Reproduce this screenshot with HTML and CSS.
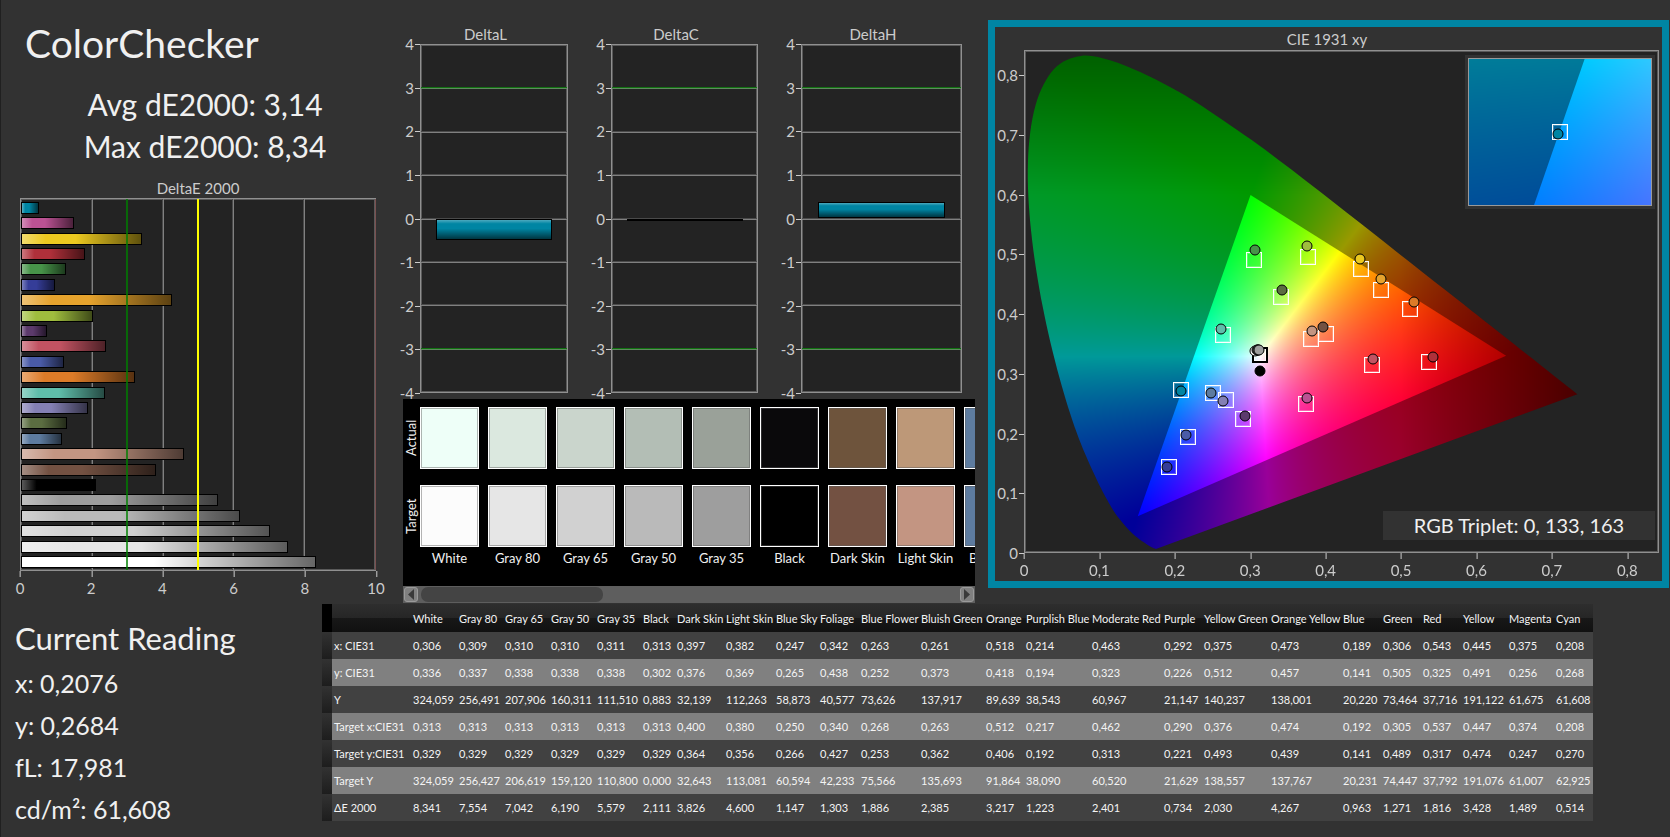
FILE: index.html
```html
<!DOCTYPE html>
<html lang="en">
	<head>
		<meta charset="UTF-8" />
		<meta name="viewport" content="width=device-width, initial-scale=1.0" />
		<title>ColorChecker</title>
		<link rel="stylesheet" href="styles.css">
	</head>
	<body>
		<main class="dashboard">
			<section class="summary">
				<h1>ColorChecker</h1>
				<p class="stat">Avg dE2000: 3,14</p>
				<p class="stat">Max dE2000: 8,34</p>
				<div class="de-chart">
					<h2 class="chart-title">DeltaE 2000</h2>
					<div class="plot de-plot" id="de-plot"></div>
					<div class="x-axis" id="de-axis"></div>
				</div>
			</section>

			<section class="middle">
				<div class="delta-charts">
					<div class="delta-chart" data-value="-0.5">
						<h2 class="chart-title">DeltaL</h2>
					</div>
					<div class="delta-chart" data-value="-0.03">
						<h2 class="chart-title">DeltaC</h2>
					</div>
					<div class="delta-chart" data-value="0.37">
						<h2 class="chart-title">DeltaH</h2>
					</div>
				</div>
				<div class="patches">
					<div class="patch-heads">
						<span class="patch-head">Actual</span>
						<span class="patch-head">Target</span>
					</div>
					<div class="patch-list" id="patch-list"></div>
				</div>
				<div class="scrollbar">
					<button class="scroll-button" aria-label="Scroll left">
						<svg viewBox="0 0 12 13"><path d="M9 1v11L3 6.5z" /></svg>
					</button>
					<div class="scroll-track"><div class="scroll-thumb"></div></div>
					<button class="scroll-button" aria-label="Scroll right">
						<svg viewBox="0 0 12 13"><path d="M3 1v11l6-5.500z" /></svg>
					</button>
				</div>
			</section>

			<section class="cie">
				<h2 class="chart-title">CIE 1931 xy</h2>
				<div class="cie-body">
					<div class="y-axis" id="cie-y"></div>
					<div class="plot cie-plot">
						<canvas id="gamut"></canvas>
						<div class="markers" id="markers"></div>
						<div class="inset">
							<div class="inset-view">
								<canvas id="inset"></canvas>
								<div class="markers" id="inset-markers"></div>
							</div>
						</div>
						<div class="triplet">RGB Triplet: 0, 133, 163</div>
					</div>
				</div>
				<div class="x-axis cie-x" id="cie-x"></div>
			</section>
		</main>

		<div class="bottom">
			<section class="reading">
				<h2>Current Reading</h2>
				<p>x: 0,2076</p>
				<p>y: 0,2684</p>
				<p>fL: 17,981</p>
				<p>cd/m²: 61,608</p>
			</section>
			<table class="readings" id="readings"></table>
		</div>

		<script src="script.js"></script>
	</body>
</html>
```

FILE: styles.css
```css
* {
	box-sizing: border-box;
}
body {
	margin: 0;
	min-height: 100vh;
	background-color: #323232;
	box-shadow: inset 1px 0 0 #202020;
	color: #f0f0f0;
	font-family: Lato, "Open Sans", sans-serif;
}
h1,
h2,
p {
	margin: 0;
	font-weight: 400;
}
canvas {
	display: block;
	width: 100%;
	height: 100%;
}
.dashboard {
	display: grid;
	grid-template-columns: minmax(0, 403fr) minmax(0, 585fr) minmax(0, 682fr);
}

/* charts */
.chart-title {
	font-size: 15px;
	line-height: 20px;
	text-align: center;
	color: #cccccc;
}
.plot {
	position: relative;
	background-color: #232323;
	border: 1px solid #909090;
	box-shadow: inset 0 0 0 1px #5a5a5a;
}
.grid-x,
.grid-y {
	position: absolute;
	background-color: #808080;
}
.grid-x {
	top: 0;
	bottom: 0;
	width: 1px;
	box-shadow: -1px 0 0 #4a4a4a;
}
.grid-y {
	left: 0;
	right: 0;
	height: 1px;
	box-shadow: 0 -1px 0 #4a4a4a;
}
.grid-x.limit-green {
	width: 2px;
	margin-left: -1px;
	background-color: rgba(0, 128, 0, 0.75);
	box-shadow: none;
}
.grid-y.limit-green {
	background-color: #5f8a5f;
	box-shadow: 0 -1px 0 #107010;
}
.grid-x.limit-yellow {
	width: 2px;
	margin-left: -1px;
	background-color: #ffff00;
	box-shadow: none;
}
.grid-x.limit-red {
	background-color: #7a5050;
	box-shadow: none;
}
.x-axis {
	position: relative;
	height: 29px;
	font-size: 15px;
	line-height: 20px;
	color: #cccccc;
}
.x-label {
	position: absolute;
	top: 7px;
	transform: translateX(-50%);
}
.x-label::before {
	content: "";
	position: absolute;
	left: 50%;
	top: -7px;
	width: 1px;
	height: 6px;
	background-color: #cccccc;
}
.y-axis {
	position: relative;
	font-size: 15px;
	line-height: 20px;
	color: #cccccc;
}
.y-label {
	position: absolute;
	right: 0;
	padding-right: 6px;
	transform: translateY(-50%);
}
.y-label::before {
	content: "";
	position: absolute;
	right: 0;
	top: 50%;
	width: 5px;
	height: 1px;
	background-color: #cccccc;
}

/* left column */
.summary {
	padding: 19px 27px 0 20px;
}
.summary h1 {
	padding-left: 5px;
	margin-bottom: 16px;
	font-size: 39px;
	line-height: 48px;
}
.stat {
	padding-left: 14px;
	font-size: 30px;
	line-height: 42px;
	text-align: center;
}
.de-chart {
	margin-top: 11px;
}
.de-plot {
	height: 373px;
	padding-top: 1px;
	display: flex;
	flex-direction: column;
	justify-content: space-around;
}
.de-bar {
	position: relative;
	height: 12px;
	border: 1px solid #000000;
	background-image: linear-gradient(90deg, rgba(255, 255, 255, 0.35), transparent 20%, transparent 45%, rgba(0, 0, 0, 0.6));
}

/* delta charts */
.middle {
	padding: 24px 13px 0 0;
}
.delta-charts {
	display: grid;
	grid-template-columns: 165fr 164fr 178fr;
	gap: 26px;
	padding-right: 13px;
}
.delta-body {
	display: grid;
	grid-template-columns: 17px 1fr;
	height: 349px;
}
.delta-bar {
	position: absolute;
	left: 10%;
	right: 10%;
	border: 1px solid #000000;
	background-color: #0085a3;
	background-image: linear-gradient(rgba(255, 255, 255, 0.3), transparent 20%, transparent 45%, rgba(0, 0, 0, 0.6));
}

/* patches */
.patches {
	display: flex;
	height: 187px;
	margin-top: 6px;
	padding-top: 8px;
	background-color: #000000;
	overflow: hidden;
}
.patch-heads {
	flex: none;
	width: 17px;
	display: flex;
	flex-direction: column;
	gap: 16px;
}
.patch-head {
	height: 62px;
	writing-mode: vertical-rl;
	transform: rotate(180deg);
	font-size: 13px;
	line-height: 17px;
	text-align: center;
}
.patch-list {
	display: flex;
	gap: 9px;
}
.patch {
	flex: none;
	width: 59px;
	text-align: center;
	font-size: 13px;
	line-height: 16px;
	white-space: nowrap;
}
.swatch {
	height: 62px;
	margin-bottom: 16px;
	border: 1px solid #ffffff;
	box-shadow: inset 0 0 0 1px rgba(90, 90, 90, 0.45);
}
.swatch + .swatch {
	margin-bottom: 3px;
}
.scrollbar {
	display: flex;
	align-items: center;
	height: 17px;
	padding: 0 1px;
	gap: 3px;
	background-color: #5e5e5e;
}
.scroll-button {
	width: 14px;
	height: 15px;
	padding: 0;
	border: 1px solid #9a9a9a;
	border-radius: 3px;
	background-color: #808080;
}
.scroll-button svg {
	display: block;
	width: 12px;
	height: 13px;
	fill: #3a3a3a;
}
.scroll-track {
	flex: 1;
}
.scroll-thumb {
	width: 34%;
	height: 15px;
	border-radius: 7px;
	background-color: #444444;
}

/* chromaticity chart */
.cie {
	height: 568px;
	margin: 20px 1px 0 0;
	padding: 2px 3px 0 0;
	border: 7px solid #0085a3;
}
.cie-body {
	display: grid;
	grid-template-columns: 29px 1fr;
	height: 503px;
	margin-top: 1px;
}
.cie-x {
	margin-left: 29px;
}
.markers {
	position: absolute;
	inset: 0;
}
.target,
.actual {
	position: absolute;
	transform: translate(-50%, -50%);
}
.target {
	width: 16px;
	height: 16px;
	border: 1px solid #ffffff;
	box-shadow: inset 0 0 0 1px rgba(255, 255, 255, 0.25);
}
.target.gray {
	border: 2px solid #000000;
}
.actual {
	width: 11px;
	height: 11px;
	border: 1px solid #000000;
	border-radius: 50%;
}
.inset {
	position: absolute;
	top: 4px;
	right: 3px;
	width: 190px;
	height: 154px;
	padding: 3px;
	background-color: #323232;
}
.inset-view {
	position: relative;
	height: 100%;
	border: 1px solid #999999;
}
.triplet {
	position: absolute;
	right: 3px;
	bottom: 12px;
	width: 272px;
	font-size: 20px;
	line-height: 29px;
	text-align: center;
	background-color: #323232;
}

/* bottom area */
.bottom {
	display: flex;
	align-items: flex-start;
	padding-top: 1px;
}
.reading {
	flex: none;
	width: 322px;
	padding: 13px 0 0 15px;
	font-size: 25px;
	line-height: 42px;
}
.reading h2 {
	margin-bottom: 3px;
	font-size: 31px;
}
.readings {
	table-layout: fixed;
	width: 1271px;
	border-collapse: collapse;
	font-size: 11px;
	color: #f4f4f4;
}
.readings th,
.readings td {
	height: 27px;
	padding: 0 0 0 4px;
	font-weight: 400;
	text-align: left;
	white-space: nowrap;
}
.readings thead th {
	height: 28px;
}
.readings tbody th {
	padding-left: 2px;
}
.readings thead tr {
	background: linear-gradient(#2e2e2e, #262626 50%, #181818 50%, #111111);
}
.readings tbody tr {
	background-color: #414141;
}
.readings tbody tr:nth-child(even) {
	background-color: #808080;
}
.readings tbody .grip {
	background: linear-gradient(#323232, #1d1d1d);
}
.readings thead .grip {
	background-color: #000000;
}
```

FILE: script.js
```js
// name, target color, column width, x, y, Y, target x, target y, target Y, dE
const patches = [
	["White", "#ffffff", 46, "0,306", "0,336", "324,059", "0,313", "0,329", "324,059", "8,341"],
	["Gray 80", "#e6e6e6", 46, "0,309", "0,337", "256,491", "0,313", "0,329", "256,427", "7,554"],
	["Gray 65", "#d1d1d1", 46, "0,310", "0,338", "207,906", "0,313", "0,329", "206,619", "7,042"],
	["Gray 50", "#bababa", 46, "0,310", "0,338", "160,311", "0,313", "0,329", "159,120", "6,190"],
	["Gray 35", "#9e9e9e", 46, "0,311", "0,338", "111,510", "0,313", "0,329", "110,800", "5,579"],
	["Black", "#000000", 34, "0,313", "0,302", "0,883", "0,313", "0,329", "0,000", "2,111"],
	["Dark Skin", "#735142", 49, "0,397", "0,376", "32,139", "0,400", "0,364", "32,643", "3,826"],
	["Light Skin", "#c39582", 50, "0,382", "0,369", "112,263", "0,380", "0,356", "113,081", "4,600"],
	["Blue Sky", "#5d7b9f", 44, "0,247", "0,265", "58,873", "0,250", "0,266", "60,594", "1,147"],
	["Foliage", "#5b6d41", 41, "0,342", "0,438", "40,577", "0,340", "0,427", "42,233", "1,303"],
	["Blue Flower", "#8480b4", 60, "0,263", "0,252", "73,626", "0,268", "0,253", "75,566", "1,886"],
	["Bluish Green", "#5fbdaa", 65, "0,261", "0,373", "137,917", "0,263", "0,362", "135,693", "2,385"],
	["Orange", "#dc7b28", 40, "0,518", "0,418", "89,639", "0,512", "0,406", "91,864", "3,217"],
	["Purplish Blue", "#4a5ba7", 66, "0,214", "0,194", "38,543", "0,217", "0,192", "38,090", "1,223"],
	["Moderate Red", "#c25362", 72, "0,463", "0,323", "60,967", "0,462", "0,313", "60,520", "2,401"],
	["Purple", "#5c3a6c", 40, "0,292", "0,226", "21,147", "0,290", "0,221", "21,629", "0,734"],
	["Yellow Green", "#9fbd3e", 67, "0,375", "0,512", "140,237", "0,376", "0,493", "138,557", "2,030"],
	["Orange Yellow", "#e6a32d", 72, "0,473", "0,457", "138,001", "0,474", "0,439", "137,767", "4,267"],
	["Blue", "#353d98", 40, "0,189", "0,141", "20,220", "0,192", "0,141", "20,231", "0,963"],
	["Green", "#479349", 40, "0,306", "0,505", "73,464", "0,305", "0,489", "74,447", "1,271"],
	["Red", "#b0303a", 40, "0,543", "0,325", "37,716", "0,537", "0,317", "37,792", "1,816"],
	["Yellow", "#ecc920", 46, "0,445", "0,491", "191,122", "0,447", "0,474", "191,076", "3,428"],
	["Magenta", "#bb5293", 47, "0,375", "0,256", "61,675", "0,374", "0,247", "61,007", "1,489"],
	["Cyan", "#0085a3", 41, "0,208", "0,268", "61,608", "0,208", "0,270", "62,925", "0,514"],
];
const measuredColors = ["#eefff8", "#dbe8df", "#cad5cc", "#b3beb5", "#9aa199", "#0a090b", "#6e543c", "#bd9878", "#5e7c9f"];
const rowNames = ["x: CIE31", "y: CIE31", "Y", "Target x:CIE31", "Target y:CIE31", "Target Y", "ΔE 2000"];

const num = (text) => parseFloat(text.replace(",", "."));
const byId = (id) => document.getElementById(id);

// DeltaE bars
let html = "";
for (const v of [2, 4, 6, 8]) {
	html += `<span class="grid-x" style="left:${v * 10}%"></span>`;
}
for (const p of [...patches].reverse()) {
	html += `<div class="de-bar" style="width:${num(p[9]) * 10}%;background-color:${p[1]}"></div>`;
}
html += '<span class="grid-x limit-green" style="left:30%"></span>';
html += '<span class="grid-x limit-yellow" style="left:50%"></span>';
html += '<span class="grid-x limit-red" style="left:100%"></span>';
byId("de-plot").innerHTML = html;
byId("de-axis").innerHTML = [0, 2, 4, 6, 8, 10]
	.map((v) => `<span class="x-label" style="left:${v * 10}%">${v}</span>`)
	.join("");

// DeltaL, DeltaC and DeltaH
for (const chart of document.querySelectorAll(".delta-chart")) {
	const value = parseFloat(chart.dataset.value);
	let labels = "";
	let lines = "";
	for (let v = 4; v >= -4; v--) {
		const top = (4 - v) * 12.5;
		labels += `<span class="y-label" style="top:${top}%">${v}</span>`;
		if (Math.abs(v) < 4) {
			lines += `<span class="grid-y${Math.abs(v) === 3 ? " limit-green" : ""}" style="top:${top}%"></span>`;
		}
	}
	const top = (4 - Math.max(value, 0)) * 12.5;
	lines += `<div class="delta-bar" style="top:${top}%;height:${Math.abs(value) * 12.5}%"></div>`;
	chart.innerHTML += `<div class="delta-body"><div class="y-axis">${labels}</div><div class="plot">${lines}</div></div>`;
}

// Swatches
byId("patch-list").innerHTML = measuredColors
	.map(
		(color, i) => `<div class="patch">
			<div class="swatch" style="background-color:${color}"></div>
			<div class="swatch" style="background-color:${i ? patches[i][1] : "#fcfcfc"}"></div>
			${patches[i][0]}
		</div>`
	)
	.join("");

// Readings table
html = '<colgroup><col style="width:10px"><col style="width:77px">';
html += patches.map((p) => `<col style="width:${p[2]}px">`).join("");
html += '</colgroup><thead><tr><th class="grip"></th><th></th>';
html += patches.map((p) => `<th scope="col">${p[0]}</th>`).join("");
html += "</tr></thead><tbody>";
rowNames.forEach((name, i) => {
	html += `<tr><td class="grip"></td><th scope="row">${name}</th>`;
	html += patches.map((p) => `<td>${p[i + 3]}</td>`).join("") + "</tr>";
});
byId("readings").innerHTML = html + "</tbody>";

// Chromaticity chart
const range = 0.842;
const locus = [
	[0.1741, 0.005], [0.1644, 0.0109], [0.144, 0.0297], [0.1241, 0.0578], [0.1096, 0.0868], [0.0913, 0.1327],
	[0.0687, 0.2007], [0.0454, 0.295], [0.0235, 0.4127], [0.0082, 0.5384], [0.0039, 0.6548], [0.0139, 0.7502],
	[0.0389, 0.812], [0.0743, 0.8338], [0.1142, 0.8262], [0.1547, 0.8059], [0.1929, 0.7816], [0.2296, 0.7543],
	[0.3016, 0.6923], [0.3731, 0.6245], [0.4441, 0.5547], [0.5125, 0.4866], [0.5752, 0.4242], [0.627, 0.3725],
	[0.6915, 0.3083], [0.7347, 0.2653],
];
const gamut = [[0.64, 0.33], [0.3, 0.6], [0.15, 0.06]];

function xyToRgb(x, y) {
	const X = x / y;
	const Z = (1 - x - y) / y;
	const rgb = [
		3.2406 * X - 1.5372 - 0.4986 * Z,
		-0.9689 * X + 1.8758 + 0.0415 * Z,
		0.0557 * X - 0.204 + 1.057 * Z,
	].map((c) => Math.max(c, 0));
	const fade = (1 - Math.max(x - 0.5, 0) * 2.2) * (1 - Math.max(y - 0.6, 0) * 1.6);
	return rgb.map((c) => (c / Math.max(...rgb)) * 255 * fade);
}

function drawDiagram(canvas, x0, y0, x1, y1) {
	const w = (canvas.width = canvas.clientWidth);
	const h = (canvas.height = canvas.clientHeight);
	const ctx = canvas.getContext("2d");
	const toX = (x) => ((x - x0) / (x1 - x0)) * w;
	const toY = (y) => h - ((y - y0) / (y1 - y0)) * h;

	// one layer of full colors, one dimmed for everything outside the gamut
	const layer = (level) => {
		const buffer = document.createElement("canvas");
		buffer.width = w;
		buffer.height = h;
		const image = new ImageData(w, h);
		for (let j = 0; j < h; j++) {
			for (let i = 0; i < w; i++) {
				const x = x0 + ((i + 0.5) / w) * (x1 - x0);
				const y = y1 - ((j + 0.5) / h) * (y1 - y0);
				const [r, g, b] = xyToRgb(x, y);
				image.data.set([r * level, g * level, b * level, 255], (j * w + i) * 4);
			}
		}
		buffer.getContext("2d").putImageData(image, 0, 0);
		return buffer;
	};

	const fillShape = (points, smooth, level) => {
		const p = points.map(([x, y]) => [toX(x), toY(y)]);
		ctx.save();
		ctx.beginPath();
		ctx.moveTo(...p[0]);
		for (let i = 1; i < p.length; i++) {
			if (smooth) {
				// curve that passes through every point
				const a = p[Math.max(i - 2, 0)];
				const b = p[i - 1];
				const c = p[i];
				const d = p[Math.min(i + 1, p.length - 1)];
				ctx.bezierCurveTo(
					b[0] + (c[0] - a[0]) / 6, b[1] + (c[1] - a[1]) / 6,
					c[0] - (d[0] - b[0]) / 6, c[1] - (d[1] - b[1]) / 6,
					c[0], c[1]
				);
			} else {
				ctx.lineTo(...p[i]);
			}
		}
		ctx.closePath();
		ctx.clip();
		ctx.drawImage(layer(level), 0, 0);
		ctx.restore();
	};

	fillShape(locus, true, 0.6);
	fillShape(gamut, false, 1);
}

function marker(type, x, y, x0, y0, size, color) {
	const left = ((x - x0) / size) * 100;
	const top = 100 - ((y - y0) / size) * 100;
	return `<span class="${type}" style="left:${left}%;top:${top}%${color ? ";background-color:" + color : ""}"></span>`;
}

drawDiagram(byId("gamut"), 0, 0, range, range);
drawDiagram(byId("inset"), 0.178, 0.238, 0.238, 0.298);

html = "";
patches.forEach((p, i) => {
	html += marker(i < 6 ? "target gray" : "target", num(p[6]), num(p[7]) + 0.002, 0, 0, range);
});
patches.forEach((p) => {
	html += marker("actual", num(p[3]), num(p[4]) + 0.002, 0, 0, range, p[1]);
});
byId("markers").innerHTML = html;
byId("inset-markers").innerHTML =
	marker("target", 0.208, 0.268, 0.178, 0.238, 0.06) +
	marker("actual", 0.2072, 0.267, 0.178, 0.238, 0.06, "#0085a3");

for (let i = 0; i <= 8; i++) {
	const text = i ? "0," + i : "0";
	const at = (i / 10 / range) * 100;
	byId("cie-x").innerHTML += `<span class="x-label" style="left:${at}%">${text}</span>`;
	byId("cie-y").innerHTML += `<span class="y-label" style="top:${100 - at}%">${text}</span>`;
}
```
